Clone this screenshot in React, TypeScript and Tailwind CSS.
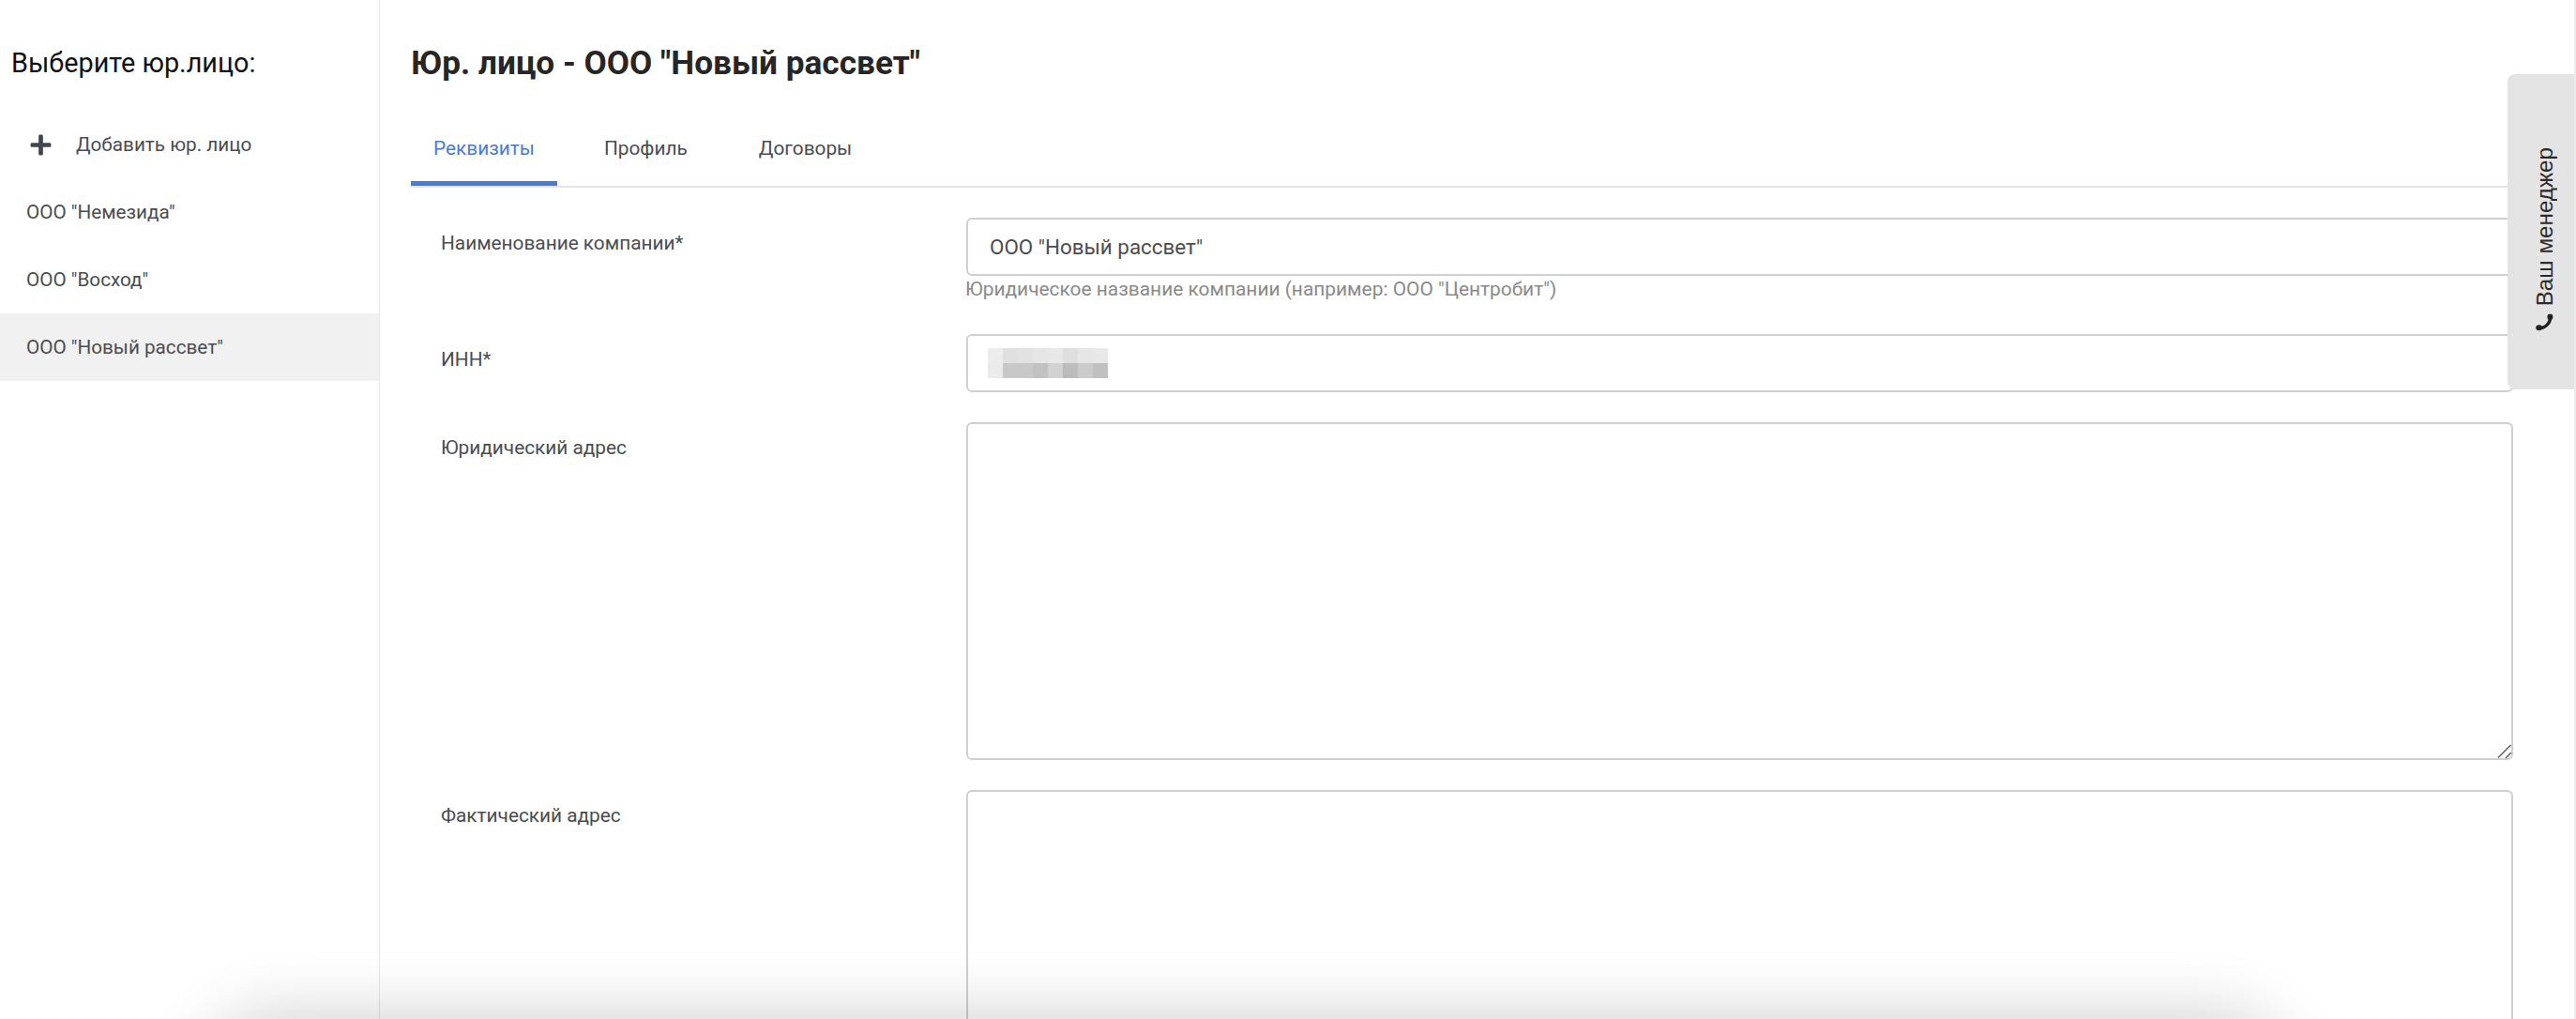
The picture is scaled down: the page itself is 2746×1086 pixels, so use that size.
import { FC } from "react";
import { FaPlus } from "react-icons/fa";

const topCells = ["bg-[#ededed]", "bg-[#e0e0e0]", "bg-[#e2e2e2]", "bg-[#e6e6e6]", "bg-[#e8e8e8]", "bg-[#dfdfdf]", "bg-[#e6e6e6]", "bg-[#e8e8e8]"];
const bottomCells = ["bg-[#ebebeb]", "bg-[#c8c8c8]", "bg-[#c8c8c8]", "bg-[#c2c2c2]", "bg-[#d2d2d2]", "bg-[#bcbcbc]", "bg-[#cbcbcb]", "bg-[#c0c0c0]"];

const companies = [
	{ name: 'ООО "Немезида"', active: false },
	{ name: 'ООО "Восход"', active: false },
	{ name: 'ООО "Новый рассвет"', active: true }
];

const Sidebar: FC = () => (
	<aside className="w-[405px] shrink-0 border-r border-[#e6e6e6]">
		<h2 className="pl-[12px] pt-[48px] text-[28.8px] leading-[38px] text-[#111111]">Выберите юр.лицо:</h2>
		<div className="mt-[32px]">
			<div className="flex h-[72px] items-center pl-[31px] text-[20.7px] text-[#4a4d52]">
				<FaPlus className="h-[25px] w-[25px] text-[#3f4652]" />
				<span className="ml-[25px] pt-[2px]">Добавить юр. лицо</span>
			</div>
			{companies.map((c) => (
				<div key={c.name} className={`flex h-[72px] items-center pl-[28px] pt-[2px] text-[20.7px] text-[#4a4d52] ${c.active ? "bg-[#f1f1f1]" : ""}`}>
					{c.name}
				</div>
			))}
		</div>
	</aside>
);

const Tabs: FC = () => (
	<div className="mt-[28px] flex h-[82px] border-b-2 border-[#e4e4e4] text-[20.8px] text-[#4a4d52]">
		<div className="flex h-[80px] w-[156px] items-center justify-center border-b-[5px] border-[#4a7bd8] pt-[6px] text-[#4a7bd8]">Реквизиты</div>
		<div className="ml-[50px] flex h-[80px] items-center border-b-[5px] border-transparent pt-[6px]">Профиль</div>
		<div className="ml-[76px] flex h-[80px] items-center border-b-[5px] border-transparent pt-[6px]">Договоры</div>
	</div>
);

const App: FC = () => {
	return (
		<div className="relative flex h-[1086px] overflow-hidden border-r-2 border-[#ececec] bg-white font-['Roboto',sans-serif]">
			<Sidebar />
			<main className="min-w-0 flex-1 pl-[33px] pr-[65px]">
				<h1 className="pt-[44px] text-[35.2px] leading-[46px] font-bold text-[#262626]">Юр. лицо - ООО "Новый рассвет"</h1>
				<Tabs />
				<div className="mt-[32px] pl-[32px] text-[20.8px] text-[#4a4d52]">
					<div className="flex">
						<label className="w-[560px] shrink-0 pt-[11px] leading-[32px]">Наименование компании*</label>
						<div className="flex-1">
							<input
								defaultValue='ООО "Новый рассвет"'
								className="h-[62px] w-full rounded-[6px] border-2 border-[#d0d0d0] px-[23px] text-[22.4px] text-[#4a4d52] outline-none"
							/>
							<p className="-ml-[1px] h-[26px] text-[20.9px] leading-[28px] text-[#8a8a8a]">Юридическое название компании (например: ООО "Центробит")</p>
						</div>
					</div>
					<div className="mt-[36px] flex">
						<label className="w-[560px] shrink-0 pt-[11px] leading-[32px]">ИНН*</label>
						<div className="flex h-[62px] flex-1 items-center rounded-[6px] border-2 border-[#d0d0d0] pl-[21px]">
							<div className="flex flex-col">
								<div className="flex">
									{topCells.map((cell, i) => (
										<div key={i} className={`h-[16px] w-[16px] ${cell}`}></div>
									))}
								</div>
								<div className="flex">
									{bottomCells.map((cell, i) => (
										<div key={i} className={`h-[16px] w-[16px] ${cell}`}></div>
									))}
								</div>
							</div>
						</div>
					</div>
					<div className="mt-[32px] flex">
						<label className="w-[560px] shrink-0 pt-[11px] leading-[32px]">Юридический адрес</label>
						<div className="relative h-[360px] flex-1">
							<textarea className="block h-full w-full resize-none rounded-[6px] border-2 border-[#d0d0d0] outline-none"></textarea>
							<svg viewBox="0 0 16 16" className="absolute right-[1px] bottom-[1px] h-[16px] w-[16px]" stroke="#666666" strokeWidth="1.6" fill="none">
								<path d="M1 14.5 14.5 1M9 15 15 9" />
							</svg>
						</div>
					</div>
					<div className="mt-[32px] flex">
						<label className="w-[560px] shrink-0 pt-[11px] leading-[32px]">Фактический адрес</label>
						<textarea className="block h-[360px] flex-1 resize-none rounded-[6px] border-2 border-[#d0d0d0] outline-none"></textarea>
					</div>
				</div>
			</main>

			{/* manager tab */}
			<div className="absolute top-[79px] right-0 flex h-[336px] w-[71px] items-center justify-center rounded-l-[8px] bg-[#e4e4e4] pl-[8px] pt-[17px] text-[#2b2b2b]">
				<div className="flex rotate-180 items-center gap-[8px] font-['Liberation_Sans',sans-serif] text-[24.2px] leading-[28px] [writing-mode:vertical-rl]">
					<svg viewBox="0 0 19 19" className="h-[19px] w-[19px] rotate-180" fill="#222222">
						<path d="M15.8 3C15.8 10 10.5 15.6 3.5 15.6" fill="none" stroke="#222222" strokeWidth="3.4" />
						<ellipse cx="15.4" cy="3.6" rx="3" ry="3.4" />
						<ellipse cx="3.6" cy="15" rx="3.4" ry="3" />
					</svg>
					<span>Ваш менеджер</span>
				</div>
			</div>

			{/* shadow of the panel below the fold */}
			<div className="pointer-events-none absolute top-[1115px] left-[250px] h-[100px] w-[2155px] rounded-[40px] shadow-[0_0_75px_30px_rgba(0,0,0,0.2)]"></div>
		</div>
	);
};

export default App;
